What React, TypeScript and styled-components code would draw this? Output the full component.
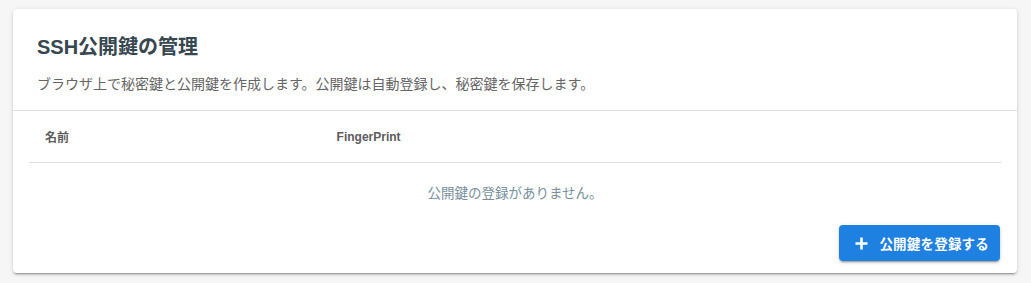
import * as React from "react";
import styled, { createGlobalStyle } from "styled-components";

const fontStack = `"Liberation Sans", "Noto Sans CJK JP", sans-serif`;

const GlobalStyle = createGlobalStyle`
  html, body {
    margin: 0;
    padding: 0;
    background: #f6f6f6;
    font-family: ${fontStack};
  }
`;

const Page = styled.div`
  padding: 9px 14px 10px 13px;
`;

const Card = styled.section`
  background: #fff;
  border-radius: 4px;
  box-shadow: 0 3px 1px -2px rgba(0, 0, 0, 0.2), 0 2px 2px 0 rgba(0, 0, 0, 0.14),
    0 1px 5px 0 rgba(0, 0, 0, 0.12);
`;

const Header = styled.header`
  padding: 22px 24px 16px;
  border-bottom: 1px solid #e0e0e0;
`;

const Title = styled.h2`
  margin: 0;
  font-size: 20px;
  line-height: 32px;
  font-weight: 700;
  color: #37474f;
`;

const Lead = styled.p`
  margin: 11px 0 0;
  font-size: 14px;
  line-height: 20px;
  color: #666;
`;

const TableWrap = styled.div`
  padding: 0 16px;
`;

const Table = styled.table`
  width: 100%;
  border-collapse: collapse;
`;

const Th = styled.th<{ $width?: string }>`
  width: ${({ $width }) => $width ?? "auto"};
  height: 51px;
  padding: 0 16px;
  text-align: left;
  font-size: 12px;
  font-weight: 700;
  color: #5c5c5c;
  border-bottom: 1px solid #e0e0e0;
`;

const EmptyCell = styled.td`
  height: 57px;
  padding: 0 16px;
  text-align: center;
  font-size: 13.5px;
  color: #78909c;
`;

const Actions = styled.div`
  display: flex;
  justify-content: flex-end;
  padding: 5px 17px 12px;
`;

const Button = styled.button`
  display: inline-flex;
  align-items: center;
  gap: 11px;
  height: 36px;
  padding: 0 11px 0 16px;
  border: none;
  border-radius: 4px;
  background: #1e80e1;
  color: #fff;
  font-family: ${fontStack};
  font-size: 13.5px;
  font-weight: 700;
  letter-spacing: 0.2px;
  box-shadow: 0 3px 1px -2px rgba(0, 0, 0, 0.2), 0 2px 2px 0 rgba(0, 0, 0, 0.14),
    0 1px 5px 0 rgba(0, 0, 0, 0.12);
  cursor: pointer;
`;

const PlusIcon = () => (
  <svg width="13" height="13" viewBox="0 0 13 13" aria-hidden="true">
    <path d="M6.5 0.5v12M0.5 6.5h12" stroke="#fff" strokeWidth="2.6" />
  </svg>
);

const App = () => {
  return (
    <Page>
      <GlobalStyle />
      <Card>
        <Header>
          <Title>SSH公開鍵の管理</Title>
          <Lead>ブラウザ上で秘密鍵と公開鍵を作成します。公開鍵は自動登録し、秘密鍵を保存します。</Lead>
        </Header>

        <TableWrap>
          <Table>
            <thead>
              <tr>
                <Th $width="30%">名前</Th>
                <Th>FingerPrint</Th>
              </tr>
            </thead>
            <tbody>
              <tr>
                <EmptyCell colSpan={2}>公開鍵の登録がありません。</EmptyCell>
              </tr>
            </tbody>
          </Table>
        </TableWrap>

        <Actions>
          <Button>
            <PlusIcon />
            公開鍵を登録する
          </Button>
        </Actions>
      </Card>
    </Page>
  );
};

export default App;
